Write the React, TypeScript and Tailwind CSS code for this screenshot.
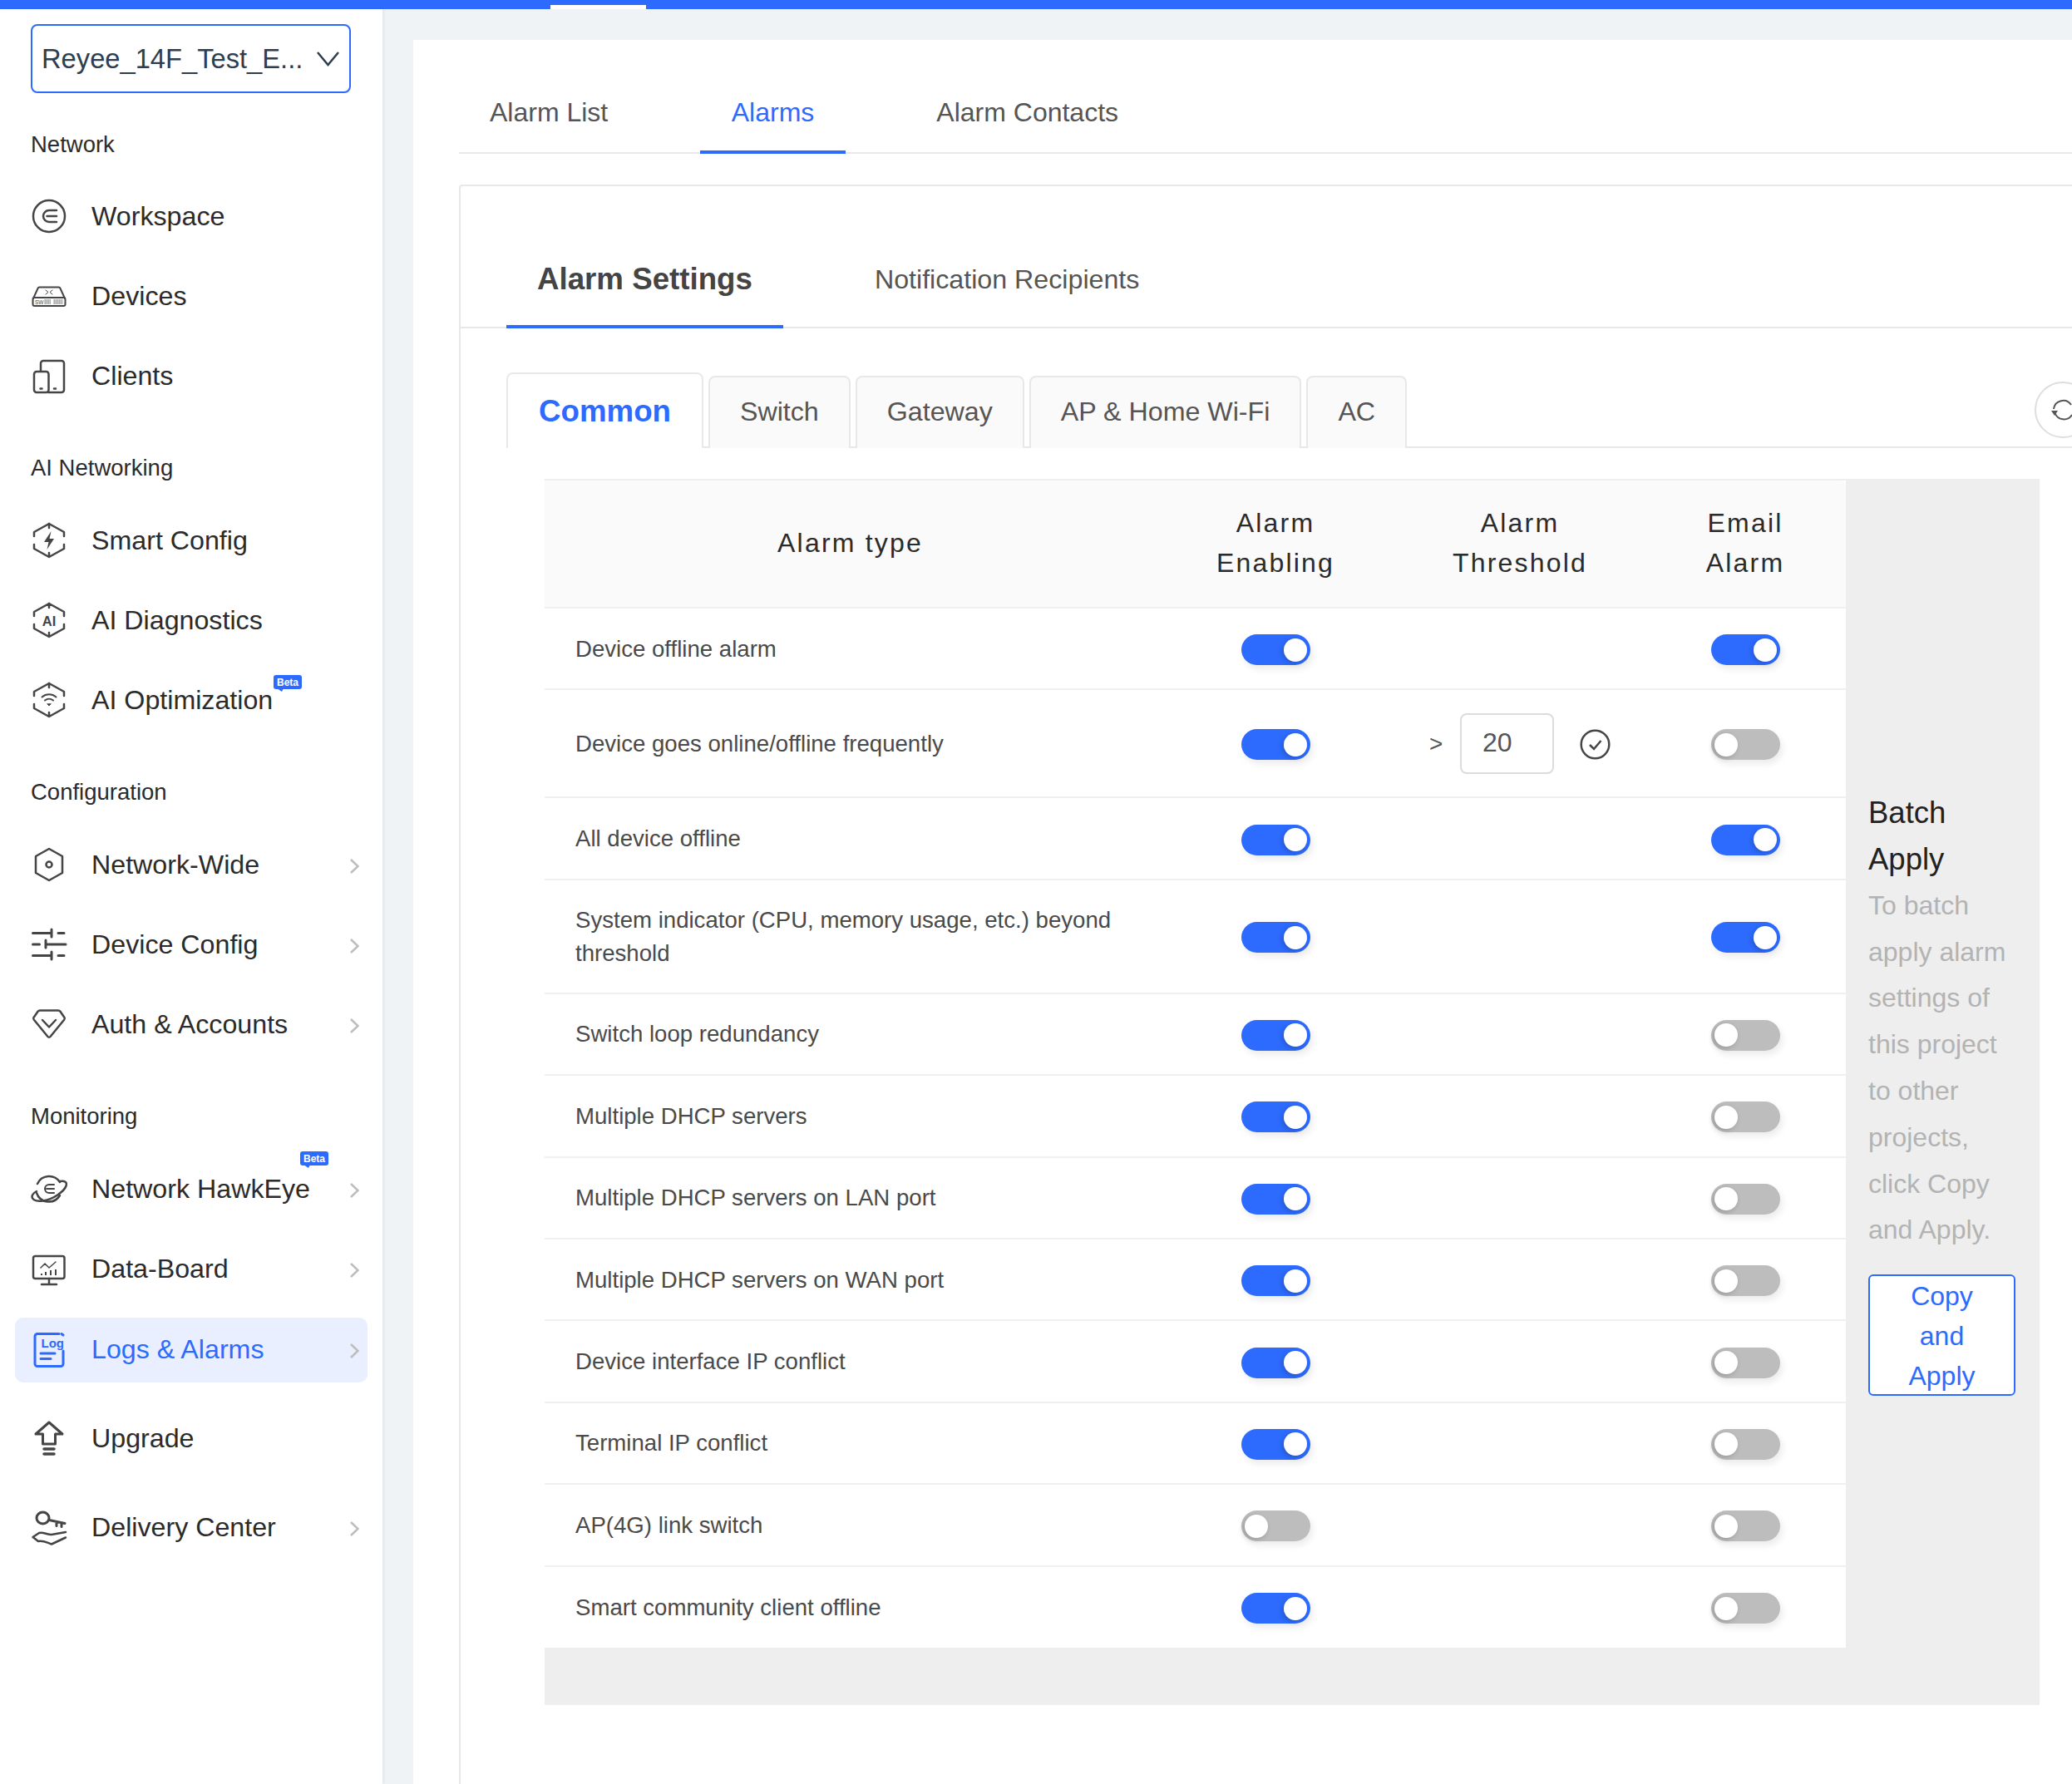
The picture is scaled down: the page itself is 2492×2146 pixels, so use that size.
import React from "react";

// sidebar icons are all drawn in a 44 box so they line up on the same axis
function Icon({ children, sw = 2.5 }: { children: React.ReactNode; sw?: number }) {
  return (
    <svg className="w-[44px] h-[44px] shrink-0" viewBox="0 0 44 44" fill="none" stroke="currentColor" strokeWidth={sw} strokeLinecap="round" strokeLinejoin="round">
      {children}
    </svg>
  );
}

const HEX = "M22 2L40 12v5M40 27v5L22 42L4 32v-5M4 17v-5L22 2M22 2v5M22 37v5";

const icons: Record<string, React.ReactNode> = {
  workspace: (
    <Icon>
      <circle cx="22" cy="22" r="19" />
      <path d="M31 15h-9a7 7 0 0 0 0 14h9M19.5 22h11.5" />
    </Icon>
  ),
  devices: (
    <Icon sw={2}>
      <path d="M3 25L8.5 13a2 2 0 0 1 2-1.5h23a2 2 0 0 1 2 1.5L41 25" />
      <rect x="2.5" y="24" width="39" height="10" rx="2" />
      <path d="M18 15l3 2.5l-3 2.5M26 15l-3 2.5l3 2.5" strokeWidth="1" />
      <text x="5" y="31.5" fontSize="6.5" fill="currentColor" stroke="none" fontFamily="Liberation Sans">SW</text>
      <path d="M16.5 27h7.5M16.5 29h7.5M16.5 31h7.5M27.5 27h11M27.5 29h11M27.5 31h11" strokeWidth="1.2" strokeDasharray="1.4 0.6" strokeLinecap="butt" />
    </Icon>
  ),
  clients: (
    <Icon>
      <path d="M12 16V7a3 3 0 0 1 3-3h22a3 3 0 0 1 3 3v32a3 3 0 0 1-3 3H21" />
      <rect x="4" y="17" width="17.5" height="25" rx="3" />
      <path d="M11.5 37.5h2M28 37.5h2" />
    </Icon>
  ),
  smart: (
    <Icon>
      <path d={HEX} />
      <path d="M24.5 11L16 24h5.5l-2 9L28 20h-5.5z" fill="currentColor" stroke="none" />
    </Icon>
  ),
  diag: (
    <Icon>
      <path d={HEX} />
      <text x="22" y="28.5" textAnchor="middle" fontSize="16.5" fontWeight="700" fill="currentColor" stroke="none" fontFamily="Liberation Sans">AI</text>
    </Icon>
  ),
  optim: (
    <Icon>
      <path d={HEX} />
      <path d="M13.5 18.5a13 13 0 0 1 17 0M17 22.5a8 8 0 0 1 10 0" strokeWidth="2" />
      <path d="M20 27l2 2l2-2z" fill="currentColor" strokeWidth="1" />
    </Icon>
  ),
  wide: (
    <Icon>
      <path d="M22 3L38 12v20L22 41L6 32V12z" />
      <circle cx="22" cy="22" r="3.5" />
    </Icon>
  ),
  config: (
    <Icon sw={3}>
      <path d="M2.5 8.5H25M25 4v9M33 8.5h7M2.5 22h8M18 17v9M18 22h24M2.5 35.5H25M25 31v9M33 35.5h7" />
    </Icon>
  ),
  auth: (
    <Icon>
      <path d="M11 5.5h22a3 3 0 0 1 2.5 1.3l5 7.2a2 2 0 0 1-.2 2.5L23.5 37a2 2 0 0 1-3 0L3.7 16.5a2 2 0 0 1-.2-2.5l5-7.2A3 3 0 0 1 11 5.5z" />
      <path d="M14 17l8 8.5l8-8.5" />
    </Icon>
  ),
  hawk: (
    <Icon>
      <path d="M35 14A15.5 15.5 0 0 0 8 16M7 27a15.5 15.5 0 0 0 28 3" />
      <path d="M35 13c6-1 9 1 7.5 5.5c-2 6-15 16.5-28.5 18c-9 1-14-2-12-7c1-2 3-3.5 5-4.5" />
      <path d="M28 17h-6a5 5 0 0 0 0 10h6M19 22h9" strokeWidth="2" />
    </Icon>
  ),
  board: (
    <Icon>
      <rect x="3" y="7" width="37.5" height="27" rx="2.5" />
      <path d="M22 34v6M13 41h18" />
      <path d="M12 21l5-5l5 5l8-7" strokeWidth="1.5" />
      <path d="M12 29h2M18 26v4M24 24v6M30 23v7" strokeWidth="2" strokeLinecap="butt" />
    </Icon>
  ),
  logs: (
    <Icon sw={3}>
      <path d="M34 3.5H8a3 3 0 0 0-3 3v33a3 3 0 0 0 3 3h28a3 3 0 0 0 3-3V24" />
      <path d="M37 3.5l2 1.5" />
      <text x="12.5" y="20" fontSize="15" fontWeight="700" fill="currentColor" stroke="none" fontFamily="Liberation Sans">Log</text>
      <path d="M12 27h17M12 33.5h12" />
    </Icon>
  ),
  upgrade: (
    <Icon sw={3}>
      <path d="M22 3L38 17h-8.5v12h-15V17H6z" />
      <path d="M16 35h12M16 41h12" strokeWidth="3.5" />
    </Icon>
  ),
  delivery: (
    <Icon sw={3}>
      <ellipse cx="14.5" cy="11" rx="7.5" ry="7" />
      <path d="M22 13.5l19 4M31 16v4.5M37 17v4.5" />
      <path d="M2.5 34l7.5-5c5-1.5 9 2 15 2l17-3M2.5 34l6.5 5c5-1.5 9 1 16 3.5l17-8" strokeWidth="2.5" />
    </Icon>
  ),
};

type NavItem = { label: string; icon: string; arrow?: boolean; active?: boolean; beta?: string; cls?: string };
type NavGroup = { title: string; titleCls: string; items: NavItem[] };

// row margins collapse into the title margin, so the title margin carries the full gap
const groups: NavGroup[] = [
  {
    title: "Network",
    titleCls: "mt-[42px] mb-[27px]",
    items: [
      { label: "Workspace", icon: "workspace" },
      { label: "Devices", icon: "devices" },
      { label: "Clients", icon: "clients" },
    ],
  },
  {
    title: "AI Networking",
    titleCls: "mt-[52px] mb-[28px]",
    items: [
      { label: "Smart Config", icon: "smart" },
      { label: "AI Diagnostics", icon: "diag" },
      { label: "AI Optimization", icon: "optim", beta: "left-[219px] top-[-10px]" },
    ],
  },
  {
    title: "Configuration",
    titleCls: "mt-[52px] mb-[28px]",
    items: [
      { label: "Network-Wide", icon: "wide", arrow: true },
      { label: "Device Config", icon: "config", arrow: true },
      { label: "Auth & Accounts", icon: "auth", arrow: true },
    ],
  },
  {
    title: "Monitoring",
    titleCls: "mt-[52px] mb-[28px]",
    items: [
      { label: "Network HawkEye", icon: "hawk", arrow: true, beta: "left-[251px] top-[-25px]" },
      { label: "Data-Board", icon: "board", arrow: true },
      { label: "Logs & Alarms", icon: "logs", arrow: true, active: true, cls: "mt-[19.5px] pb-[2px]" },
      { label: "Upgrade", icon: "upgrade", cls: "mt-[28.5px]" },
      { label: "Delivery Center", icon: "delivery", arrow: true, cls: "mt-[29px]" },
    ],
  },
];

function Beta({ className }: { className: string }) {
  return (
    <span className={`absolute ${className} flex h-[17px] w-[34px] items-center justify-center rounded-[3px] bg-[#2d6bff] text-[12px] font-bold leading-none text-white`}>
      Beta
      <span className="absolute left-[4px] top-[16px] h-0 w-0 border-l-[6px] border-r-[2px] border-t-[4px] border-l-transparent border-r-transparent border-t-[#2d6bff]" />
    </span>
  );
}

function Sidebar() {
  return (
    <aside className="relative z-10 w-[460px] shrink-0 bg-white shadow-[2px_0_3px_rgba(0,0,0,0.05)]">
      <div className="ml-[37px] mt-[18px] flex h-[83px] w-[385px] items-center justify-between rounded-[8px] border-2 border-[#2d6bff] pl-[11px] pr-[12px] text-[32.7px] text-[#2c3e50]">
        <span>Reyee_14F_Test_E...</span>
        <svg className="h-[18px] w-[27px]" viewBox="0 0 27 18" fill="none" stroke="currentColor" strokeWidth="2.5">
          <path d="M1 1l12.5 15L26 1" />
        </svg>
      </div>
      {groups.map((g) => (
        <div key={g.title}>
          <div className={`${g.titleCls} pl-[37px] text-[27.5px] leading-[40px] text-[#2b2b2b]`}>{g.title}</div>
          {g.items.map((it) => (
            <div
              key={it.label}
              className={`${it.cls ?? ""} mb-[18px] ml-[18px] flex h-[78px] w-[424px] items-center gap-[29px] rounded-[10px] pl-[19px] pr-[10px] text-[32.2px] leading-[40px] ${it.active ? "bg-[#e9effe] text-[#2d6bff]" : "text-[#2b2b2b]"}`}
            >
              <span className={it.active ? "text-[#2d6bff]" : "text-[#454545]"}>{icons[it.icon]}</span>
              <span className="relative whitespace-nowrap">
                {it.label}
                {it.beta && <Beta className={it.beta} />}
              </span>
              {it.arrow && (
                <svg className="ml-auto mt-[4px] h-[18px] w-[11px] shrink-0" viewBox="0 0 11 18" fill="none" stroke="#bdbdbd" strokeWidth="2.5">
                  <path d="M1 1l8.5 8L1 17" />
                </svg>
              )}
            </div>
          ))}
        </div>
      ))}
    </aside>
  );
}

function Toggle({ on }: { on: boolean }) {
  return (
    <span
      className={`mt-[3px] inline-flex h-[37px] w-[83px] items-center rounded-full px-[4px] align-middle shadow-[3px_5px_9px_rgba(0,0,0,0.08)] ${on ? "justify-end bg-[#2d6bff]" : "justify-start bg-[#bdbdbd]"}`}
    >
      <span className="h-[28px] w-[28px] rounded-full bg-white shadow-[-2px_2px_6px_rgba(0,0,0,0.2)]" />
    </span>
  );
}

type Row = { name: string; on: boolean; email: boolean; cls: string; threshold?: boolean };

const rows: Row[] = [
  { name: "Device offline alarm", on: true, email: true, cls: "h-[98.4px]" },
  { name: "Device goes online/offline frequently", on: true, email: false, cls: "h-[130px]", threshold: true },
  { name: "All device offline", on: true, email: true, cls: "h-[98.4px]" },
  { name: "System indicator (CPU, memory usage, etc.) beyond threshold", on: true, email: true, cls: "h-[137px]" },
  { name: "Switch loop redundancy", on: true, email: false, cls: "h-[98.4px]" },
  { name: "Multiple DHCP servers", on: true, email: false, cls: "h-[98.4px]" },
  { name: "Multiple DHCP servers on LAN port", on: true, email: false, cls: "h-[98.4px]" },
  { name: "Multiple DHCP servers on WAN port", on: true, email: false, cls: "h-[98.4px]" },
  { name: "Device interface IP conflict", on: true, email: false, cls: "h-[98.4px]" },
  { name: "Terminal IP conflict", on: true, email: false, cls: "h-[98.4px]" },
  { name: "AP(4G) link switch", on: false, email: false, cls: "h-[98.4px]" },
  { name: "Smart community client offline", on: true, email: false, cls: "h-[98.4px]" },
];

function AlarmTable() {
  return (
    <table className="mb-[70px] mt-[2px] h-fit w-[1565px] shrink-0 table-fixed bg-white">
      <colgroup>
        <col className="w-[735px]" />
        <col className="w-[288px]" />
        <col className="w-[300px]" />
        <col className="w-[242px]" />
      </colgroup>
      <thead>
        <tr className="h-[153px] border-b-2 border-[#f0f0f0] bg-[#fafafa] text-center text-[32px] font-normal leading-[48px] tracking-[2.2px] text-[#2b2b2b]">
          <th className="pb-[2px] font-normal">Alarm type</th>
          <th className="pb-[2px] font-normal">Alarm<br />Enabling</th>
          <th className="pb-[2px] font-normal">Alarm<br />Threshold</th>
          <th className="rounded-tr-[8px] pb-[2px] font-normal">Email<br />Alarm</th>
        </tr>
      </thead>
      <tbody>
        {rows.map((r, i) => (
          <tr key={r.name} className={`${r.cls} ${i < rows.length - 1 ? "border-b-2 border-[#f0f0f0]" : ""}`}>
            <td className="px-[37px] pt-[1px] text-[27.6px] leading-[40px] text-[#4a4a4a]">{r.name}</td>
            <td className="text-center">
              <Toggle on={r.on} />
            </td>
            <td>
              {r.threshold && (
                <div className="flex items-center pl-[41px] text-[#555]">
                  <span className="mt-[2px] w-[37px] text-[28px] leading-none">&gt;</span>
                  <span className="flex h-[73px] w-[113px] items-center rounded-[8px] border-2 border-[#dcdcdc] pb-[2px] pl-[25px] text-[32px]">20</span>
                  <svg className="ml-[31px] mt-[2px] h-[37px] w-[37px]" viewBox="0 0 37 37" fill="none" stroke="#454545" strokeWidth="2.5">
                    <circle cx="18.5" cy="18.5" r="16.8" />
                    <path d="M12 19l5 5l8.5-10" />
                  </svg>
                </div>
              )}
            </td>
            <td className="text-center">
              <Toggle on={r.email} />
            </td>
          </tr>
        ))}
      </tbody>
    </table>
  );
}

export default function App() {
  return (
    <div className="flex h-[2146px] w-[2492px] flex-col overflow-hidden bg-[#eff3f6] font-['Liberation_Sans',Arial,sans-serif]">
      {/* top bar */}
      <div className="flex h-[11px] shrink-0 items-end bg-[#2d6bff]">
        <div className="ml-[662px] h-[5px] w-[115px] bg-white" />
      </div>

      <div className="flex min-h-0 flex-1">
        <Sidebar />

        <main className="min-w-0 flex-1 pl-[37px] pt-[37px]">
          <div className="h-full w-[1995px] bg-white pl-[55px] pt-[39px]">
            {/* page tabs */}
            <div className="flex h-[98px] w-[1990px] items-stretch gap-[72px] border-b-2 border-[#e8e8e8] text-[32px] text-[#555]">
              <div className="-mb-[2px] flex items-start pl-[37px] pr-[39px] pt-[28px] leading-[40px]">Alarm List</div>
              <div className="-mb-[2px] flex items-start border-b-4 border-[#2d6bff] px-[37.5px] pt-[28px] leading-[40px] text-[#2d6bff]">Alarms</div>
              <div className="-mb-[2px] flex items-start px-[37.5px] pt-[28px] leading-[40px]">Alarm Contacts</div>
            </div>

            {/* card */}
            <div className="mt-[37px] h-[1930px] w-[1990px] rounded-[4px] border-2 border-[#e8e8e8]">
              <div className="flex h-[171px] items-end gap-[73px] border-b-2 border-[#e8e8e8] pl-[55px]">
                <div className="-mb-[2px] border-b-4 border-[#2d6bff] px-[37px] pb-[35px] text-[36.7px] font-bold leading-[40px] text-[#444]">Alarm Settings</div>
                <div className="-mb-[2px] px-[37px] pb-[39px] text-[32.2px] leading-[40px] text-[#555]">Notification Recipients</div>
              </div>

              <div className="pl-[55px]">
                {/* sub tabs */}
                <div className="flex h-[144px] w-[1906px] items-end gap-[6px] border-b-2 border-[#e8e8e8] text-[32.2px] text-[#555]">
                  <div className="-mb-[2px] flex h-[91px] items-start rounded-t-[8px] border-2 border-b-0 border-[#e8e8e8] bg-white px-[37px] pt-[25px] text-[36.7px] font-bold leading-[40px] text-[#2d6bff]">Common</div>
                  {["Switch", "Gateway", "AP & Home Wi-Fi", "AC"].map((t) => (
                    <div key={t} className="-mb-[2px] flex h-[87px] items-start rounded-t-[8px] border-2 border-b-0 border-[#e8e8e8] bg-[#fafafa] px-[36px] pt-[21px] leading-[40px]">
                      {t}
                    </div>
                  ))}
                  <div className="mb-[10px] ml-auto flex h-[68px] w-[68px] items-center justify-center self-end rounded-full border-2 border-[#dedede] bg-white">
                    <svg className="h-[28px] w-[28px]" viewBox="0 0 28 28" fill="none" stroke="#555" strokeWidth="2">
                      <path d="M24 8A11.5 11.5 0 0 0 3 13M4.5 18A11.5 11.5 0 0 0 25 20" />
                      <path d="M0 15h8l-4 6z" fill="#555" stroke="none" />
                    </svg>
                  </div>
                </div>

                {/* table and batch apply share the grey block */}
                <div className="ml-[46px] mt-[37px] flex h-[1475px] w-[1798px] bg-[#eeeeee]">
                  <AlarmTable />
                  <div className="flex flex-1 flex-col justify-center pl-[27px] pr-[29px] pt-[2px]">
                    <div className="text-[36.5px] leading-[56px] text-[#222]">Batch Apply</div>
                    <div className="text-[32px] leading-[55.8px] text-[#b3b3b3]">To batch apply alarm settings of this project to other projects, click Copy and Apply.</div>
                    <button className="mt-[25px] h-[146px] rounded-[6px] border-2 border-[#2d6bff] bg-white px-[30px] pb-[5px] text-center text-[32px] leading-[48px] text-[#2d6bff]">
                      Copy and Apply
                    </button>
                  </div>
                </div>
              </div>
            </div>
          </div>
        </main>
      </div>
    </div>
  );
}
